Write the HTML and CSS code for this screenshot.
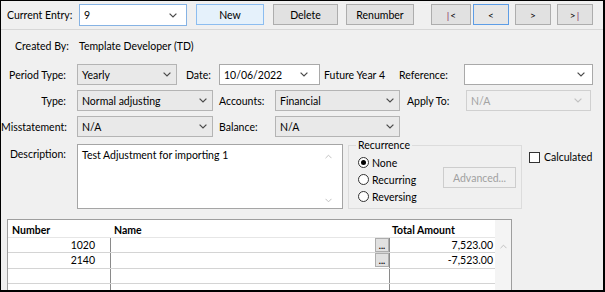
FILE: index.html
```html
<!DOCTYPE html>
<html>
<head>
<meta charset="utf-8">
<link rel="stylesheet" href="styles.css">
</head>
<body>
<div class="win">
  <div class="toolbar">
    <span class="tb-label">Current Entry:</span>
    <div class="combo edit focus cur-entry"><span>9</span><svg class="chev" viewBox="0 0 8 5"><polyline points="0.6,0.6 4,4 7.4,0.6"/></svg></div>
    <button class="btn hot b-new">New</button>
    <button class="btn b-del">Delete</button>
    <button class="btn b-ren">Renumber</button>
    <button class="btn nav b-first"><span class="bar">|</span>&lt;</button>
    <button class="btn nav b-prev focus">&lt;</button>
    <button class="btn nav b-next">&gt;</button>
    <button class="btn nav b-last">&gt;<span class="bar">|</span></button>
  </div>

  <div class="created"><span class="c-label">Created By:</span><span>Template Developer (TD)</span></div>

  <div class="row">
    <span class="lbl">Period Type:</span>
    <div class="combo w-period"><span>Yearly</span><svg class="chev" viewBox="0 0 8 5"><polyline points="0.6,0.6 4,4 7.4,0.6"/></svg></div>
    <span class="lbl2 l-date">Date:</span>
    <div class="combo edit w-date"><span>10/06/2022</span><svg class="chev" viewBox="0 0 8 5"><polyline points="0.6,0.6 4,4 7.4,0.6"/></svg></div>
    <span class="lbl2 l-future">Future Year 4</span>
    <span class="lbl2 l-ref">Reference:</span>
    <div class="combo edit w-ref"><span></span><svg class="chev" viewBox="0 0 8 5"><polyline points="0.6,0.6 4,4 7.4,0.6"/></svg></div>
  </div>

  <div class="row">
    <span class="lbl">Type:</span>
    <div class="combo w-type"><span>Normal adjusting</span><svg class="chev" viewBox="0 0 8 5"><polyline points="0.6,0.6 4,4 7.4,0.6"/></svg></div>
    <span class="lbl2 l-acc">Accounts:</span>
    <div class="combo w-acc"><span>Financial</span><svg class="chev" viewBox="0 0 8 5"><polyline points="0.6,0.6 4,4 7.4,0.6"/></svg></div>
    <span class="lbl2 l-apply">Apply To:</span>
    <div class="combo disabled w-apply"><span>N/A</span><svg class="chev" viewBox="0 0 8 5"><polyline points="0.6,0.6 4,4 7.4,0.6"/></svg></div>
  </div>

  <div class="row">
    <span class="lbl">Misstatement:</span>
    <div class="combo w-type"><span>N/A</span><svg class="chev" viewBox="0 0 8 5"><polyline points="0.6,0.6 4,4 7.4,0.6"/></svg></div>
    <span class="lbl2 l-acc">Balance:</span>
    <div class="combo w-acc"><span>N/A</span><svg class="chev" viewBox="0 0 8 5"><polyline points="0.6,0.6 4,4 7.4,0.6"/></svg></div>
  </div>

  <div class="desc-row">
    <span class="lbl d-lbl">Description:</span>
    <div class="textarea">
      <div class="ta-text">Test Adjustment for importing 1</div>
      <div class="ta-scroll">
        <svg class="sarrow" viewBox="0 0 8 5"><polyline points="0.6,4.4 4,1 7.4,4.4"/></svg>
        <svg class="sarrow" viewBox="0 0 8 5"><polyline points="0.6,0.6 4,4 7.4,0.6"/></svg>
      </div>
    </div>
    <fieldset class="group">
      <legend>Recurrence</legend>
      <div class="radios">
        <div class="radio-item"><span class="radio on"></span>None</div>
        <div class="radio-item"><span class="radio"></span>Recurring</div>
        <div class="radio-item"><span class="radio"></span>Reversing</div>
      </div>
      <button class="btn btn-adv" disabled>Advanced...</button>
    </fieldset>
    <div class="check-item"><span class="checkbox"></span>Calculated</div>
  </div>

  <div class="grid">
    <div class="cols">
      <div class="trow head">
        <div class="cell c-num">Number</div>
        <div class="cell c-name">Name</div>
        <div class="cell c-amt">Total Amount</div>
      </div>
      <div class="trow">
        <div class="cell c-num">1020</div>
        <div class="cell c-name"><span class="ell">...</span></div>
        <div class="cell c-amt">7,523.00</div>
      </div>
      <div class="trow">
        <div class="cell c-num">2140</div>
        <div class="cell c-name"><span class="ell">...</span></div>
        <div class="cell c-amt">-7,523.00</div>
      </div>
      <div class="trow">
        <div class="cell c-num"></div>
        <div class="cell c-name"></div>
        <div class="cell c-amt"></div>
      </div>
      <div class="trow">
        <div class="cell c-num"></div>
        <div class="cell c-name"></div>
        <div class="cell c-amt"></div>
      </div>
    </div>
    <div class="vscroll">
      <svg class="sarrow" viewBox="0 0 8 5"><polyline points="0.6,4.4 4,1 7.4,4.4"/></svg>
    </div>
  </div>
</div>
</body>
</html>
```

FILE: styles.css
```css
* { box-sizing: border-box; }
body {
  margin: 0;
  font-family: Lato, "Open Sans", sans-serif;
  font-size: 10.5px;
  color: #000;
}
.win {
  width: 605px;
  height: 292px;
  border: solid #000;
  border-width: 1px 2px 2px 1px;
  background: #f0f0f0;
  overflow: hidden;
}

/* toolbar */
.toolbar {
  height: 29px;
  border-bottom: 1px solid #d7d7d7;
  display: flex;
  align-items: flex-start;
  padding: 3px 0 0 6px;
}
.tb-label { width: 72px; line-height: 22px; }

.combo {
  display: flex;
  align-items: center;
  justify-content: space-between;
  height: 21px;
  border: 1px solid #b4b4b4;
  background: #e9e9e9;
  padding: 0 5px 0 4px;
  flex: none;
}
.combo.edit { background: #fff; border-color: #a9a9a9; }
.combo.focus { border-color: #86b3e4; }
.combo.disabled { background: #f0f0f0; border-color: #d0d0d0; color: #a3a3a3; }
.combo.disabled .chev polyline { stroke: #c2c2c2; }
.chev { width: 8px; height: 5px; flex: none; }
.chev polyline, .sarrow polyline { fill: none; stroke: #4a4a4a; stroke-width: 1.2; }

.cur-entry { width: 108px; height: 22px; padding-right: 9px; }

.btn {
  font: inherit;
  color: #000;
  height: 21px;
  border: 1px solid #adadad;
  background: #e1e1e1;
  padding: 0;
  flex: none;
}
.btn.hot { background: #e5f1fb; border-color: #8cbdf0; }
.btn.focus { border-color: #5d9de6; background: #e6e6e6; }
.b-new { margin-left: 9px; width: 68px; }
.b-del { margin-left: 9px; width: 65px; }
.b-ren { margin-left: 8px; width: 68px; }
.b-first { margin-left: 17px; width: 40px; }
.b-prev { margin-left: 2px; width: 36px; }
.b-next { margin-left: 6px; width: 36px; }
.b-last { margin-left: 6px; width: 36px; }
.nav { font-size: 10px; }
.bar { color: #8a2a5c; padding: 0 1px; }

/* created by */
.created {
  display: flex;
  padding: 9px 0 0 14px;
  line-height: 14px;
  height: 34px;
}
.c-label { width: 64px; }

/* form rows */
.row {
  display: flex;
  align-items: center;
  height: 21px;
}
.row + .row { margin-top: 5px; }
.lbl { width: 65px; text-align: right; margin-right: 11px; flex: none; }
.lbl2 { flex: none; }
.w-period { width: 100px; }
.l-date { margin-left: 9px; width: 33px; }
.w-date { width: 101px; padding-right: 11px; }
.l-future { margin-left: 4px; width: 75px; }
.l-ref { width: 65px; }
.w-ref { width: 129px; padding-right: 7px; }
.w-type { width: 136px; }
.l-acc { margin-left: 6px; width: 56px; }
.w-acc { width: 125px; }
.l-apply { margin-left: 7px; width: 59px; }
.w-apply { width: 125px; padding-right: 8px; }

/* description */
.desc-row {
  display: flex;
  align-items: flex-start;
  margin-top: 1px;
  height: 72px;
}
.d-lbl { margin-top: 9px; line-height: 14px; }
.textarea {
  width: 266px;
  height: 65px;
  margin-top: 6px;
  background: #fff;
  border: 1px solid #a5a5a5;
  display: flex;
  flex: none;
}
.ta-text { flex: 1; padding: 3px 0 0 4px; line-height: 14px; }
.ta-scroll {
  width: 27px;
  display: flex;
  flex-direction: column;
  justify-content: space-between;
  align-items: center;
  padding: 9px 0 5px;
}
.sarrow { width: 7px; height: 5px; }
.sarrow polyline { stroke: #b9b9b9; stroke-width: 1; }

.group {
  margin: 0 0 0 5px;
  padding: 0 0 0 9px;
  width: 174px;
  height: 71px;
  border: 1px solid #dcdcdc;
  display: flex;
  align-items: flex-start;
  flex: none;
  min-width: 0;
}
.group legend {
  padding: 0 2px;
  margin-left: -2px;
  line-height: 14px;
}
.radios { display: flex; flex-direction: column; padding-top: 2px; }
.radio-item { display: flex; align-items: center; height: 17px; }
.radio {
  width: 11px;
  height: 11px;
  border: 1px solid #333;
  border-radius: 50%;
  background: #fff;
  margin-right: 3px;
  display: flex;
  align-items: center;
  justify-content: center;
}
.radio.on::after {
  content: "";
  width: 5px;
  height: 5px;
  border-radius: 50%;
  background: #000;
}
.btn-adv {
  margin: 15px 5px 0 auto;
  width: 73px;
  height: 21px;
  background: #f0f0f0;
  border-color: #cdcdcd;
  color: #a0a0a0;
}
.check-item {
  display: flex;
  align-items: center;
  margin: 12px 0 0 7px;
  line-height: 14px;
}
.checkbox {
  width: 11px;
  height: 11px;
  border: 1px solid #333;
  background: #fff;
  margin-right: 4px;
}

/* grid */
.grid {
  display: flex;
  margin: 9px 0 0 6px;
  width: 505px;
  height: 80px;
  border: 1px solid #9e9e9e;
  border-bottom: none;
  background: #fff;
}
.cols { width: 487px; flex: none; }
.vscroll {
  flex: 1;
  background: #f4f4f4;
  display: flex;
  justify-content: center;
  padding-top: 24px;
}
.trow {
  display: flex;
  height: 15.4px;
  border-bottom: 1px solid #d4d4d4;
  line-height: 14px;
}
.trow.head {
  height: 18px;
  border-bottom-color: #e6e6e6;
  font-weight: bold;
  padding-top: 3px;
}
.cell { flex: none; }
.c-num { width: 103px; text-align: right; padding-right: 15px; border-right: 1px solid #8a8a8a; }
.c-name { width: 279px; border-right: 1px solid #8a8a8a; display: flex; justify-content: flex-end; }
.c-amt { width: 105px; text-align: right; padding-right: 2px; }
.head .c-num { text-align: left; padding-left: 4px; border-right-color: #fff; }
.head .c-name { justify-content: flex-start; padding-left: 3px; border-right-color: #fff; }
.head .c-amt { text-align: left; padding-left: 2px; }
.ell {
  width: 14px;
  height: 14px;
  background: #e1e1e1;
  border: 1px solid #adadad;
  font-size: 9px;
  font-weight: bold;
  line-height: 14px;
  text-align: center;
}
```
